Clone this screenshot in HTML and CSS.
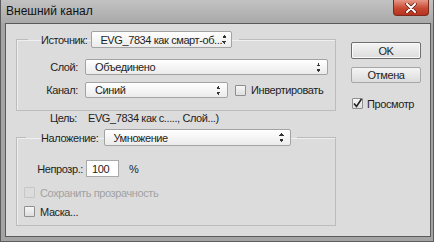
FILE: index.html
```html
<!DOCTYPE html>
<html lang="ru">
<head>
    <meta charset="UTF-8">
    <title>Внешний канал</title>
    <link rel="stylesheet" href="styles.css">
</head>
<body>
    <div class="window">
        <div class="titlebar">
            <span class="title">Внешний канал</span>
            <span class="close">
                <svg width="12" height="10" viewBox="0 0 12 10">
                    <path d="M2 1 L10 9 M10 1 L2 9" stroke="#5a1a10" stroke-width="3.4" stroke-linecap="round"/>
                    <path d="M2 1 L10 9 M10 1 L2 9" stroke="#fff" stroke-width="2" stroke-linecap="round"/>
                </svg>
            </span>
        </div>

        <div class="panel">
            <div class="main">
                <fieldset class="group group-source">
                    <legend>
                        <span class="legend-row">
                            <span class="lbl">Источник:</span>
                            <span class="select select-source">EVG_7834 как смарт-об... <span class="arrows"></span></span>
                        </span>
                    </legend>
                    <div class="row first">
                        <span class="col">Слой:</span>
                        <span class="select select-layer">Объединено <span class="arrows"></span></span>
                    </div>
                    <div class="row">
                        <span class="col">Канал:</span>
                        <span class="select select-channel">Синий <span class="arrows"></span></span>
                        <span class="check invert"></span>
                        <span>Инвертировать</span>
                    </div>
                </fieldset>

                <div class="target">
                    <span class="col">Цель:</span>
                    <span class="target-value">EVG_7834 как с....., Слой...)</span>
                </div>

                <fieldset class="group group-blend">
                    <legend>
                        <span class="legend-row">
                            <span class="lbl">Наложение:</span>
                            <span class="select select-blend">Умножение <span class="arrows"></span></span>
                        </span>
                    </legend>
                    <div class="row opacity">
                        <span class="col-wide">Непрозр.:</span>
                        <span class="input">100</span>
                        <span class="percent">%</span>
                    </div>
                    <div class="check-row disabled first-check">
                        <span class="check"></span>
                        <span>Сохранить прозрачность</span>
                    </div>
                    <div class="check-row">
                        <span class="check"></span>
                        <span>Маска...</span>
                    </div>
                </fieldset>
            </div>

            <div class="side">
                <button class="btn btn-default">OK</button>
                <button class="btn">Отмена</button>
                <div class="check-row preview">
                    <span class="check">
                        <svg width="11" height="11" viewBox="0 0 11 11">
                            <path d="M2 5.5 L4.5 8.5 L9.5 1" fill="none" stroke="#222" stroke-width="1.6"/>
                        </svg>
                    </span>
                    <span>Просмотр</span>
                </div>
            </div>
        </div>
    </div>
</body>
</html>
```

FILE: styles.css
```css
body {
    margin: 0;
    background-color: #9e9e9e;
    font-family: 'Liberation Sans', Arial, sans-serif;
    font-size: 11px;
    letter-spacing: -0.4px;
    color: #1e1e1e;
}

.window {
    width: 434px;
    height: 242px;
    box-sizing: border-box;
    display: flex;
    flex-direction: column;
    background-color: #a4a4a4;
    border-left: 1px solid #5c5c5c;
    border-right: 1px solid #5c5c5c;
    border-bottom: 1px solid #5c5c5c;
}

.titlebar {
    height: 23px;
    flex-shrink: 0;
    display: flex;
    justify-content: space-between;
    align-items: flex-start;
    background: linear-gradient(#c2c2c2, #a9a9a9);
}

.title {
    padding-left: 5px;
    line-height: 23px;
    font-size: 12px;
    letter-spacing: 0;
    color: #111;
}

.close {
    width: 36px;
    height: 16px;
    margin-right: 4px;
    box-sizing: border-box;
    display: flex;
    align-items: center;
    justify-content: center;
    background: linear-gradient(#e59886, #c84a33 55%, #b5331f);
    border: 1px solid #7b2b1f;
    border-top: none;
    border-radius: 0 0 4px 4px;
}

.panel {
    flex: 1;
    margin: 0 2px 4px 4px;
    display: flex;
    padding: 7px 0 0 10px;
    background-color: #dcdcdc;
    border: 1px solid #5a5a5a;
}

.main {
    width: 320px;
}

/* group boxes */
.group {
    margin: 0;
    padding: 0;
    min-width: 0;
    border: 1px solid #bcbcbc;
    box-shadow: inset 1px 1px 0 #efefef;
}

.group legend {
    padding: 0;
}

.legend-row {
    display: flex;
    align-items: center;
}

.group-source legend {
    margin-left: 11px;
    padding: 0 7px 0 13px;
}

.group-source .lbl {
    margin-right: 4px;
}

.group-blend legend {
    margin-left: 9px;
    padding: 0 6px 0 15px;
}

.group-blend .lbl {
    margin-right: 6px;
}

.group-source {
    padding-bottom: 12px;
}

.group-blend {
    padding-bottom: 7px;
}

.row {
    display: flex;
    align-items: center;
    height: 16px;
    margin-top: 7px;
}

.row.first {
    margin-top: 11px;
}

.col {
    width: 61px;
    margin-right: 7px;
    text-align: right;
}

/* selects */
.select {
    height: 16px;
    box-sizing: border-box;
    display: flex;
    align-items: center;
    padding-left: 9px;
    background: linear-gradient(#ffffff, #ebebeb);
    border: 1px solid #a3a3a3;
    border-radius: 2px;
    white-space: nowrap;
    overflow: hidden;
}

.legend-row .select {
    height: 17px;
    padding-left: 8px;
}

.select-source { width: 141px; }
.select-layer { width: 243px; }
.select-channel { width: 143px; }
.select-blend { width: 187px; }

.arrows {
    flex-shrink: 0;
    margin-left: auto;
    margin-right: 6px;
    width: 5px;
    height: 9px;
    background:
        linear-gradient(to bottom right, transparent 50%, #333 50%) 0 0 / 3px 3px no-repeat,
        linear-gradient(to bottom left, transparent 50%, #333 50%) 2px 0 / 3px 3px no-repeat,
        linear-gradient(to top right, transparent 50%, #333 50%) 0 6px / 3px 3px no-repeat,
        linear-gradient(to top left, transparent 50%, #333 50%) 2px 6px / 3px 3px no-repeat;
}

/* checkboxes */
.check {
    width: 11px;
    height: 11px;
    box-sizing: border-box;
    flex-shrink: 0;
    display: flex;
    background: linear-gradient(#f6f6f6, #dedede);
    border: 1px solid #8e8e8e;
    border-radius: 1px;
}

.check svg {
    margin: -1px;
}

.check.invert {
    margin: 0 5px 0 7px;
}

.check-row {
    display: flex;
    align-items: center;
    gap: 5px;
    height: 13px;
    margin: 6px 0 0 7px;
}

.check-row.first-check {
    margin-top: 9px;
}

.check-row.disabled {
    color: #a2a2a2;
}

.check-row.disabled .check {
    background: #dcdcdc;
    border-color: #c6c6c6;
}

/* target line */
.target {
    display: flex;
    align-items: center;
    height: 14px;
    margin-bottom: 4px;
}

.target .col {
    margin-right: 11px;
}

/* opacity */
.row.opacity {
    margin-top: 14px;
    height: 17px;
}

.col-wide {
    width: 66px;
    margin-right: 3px;
    text-align: right;
}

.input {
    width: 33px;
    height: 17px;
    box-sizing: border-box;
    padding-left: 5px;
    display: flex;
    align-items: center;
    background-color: #fff;
    border: 1px solid #a9a9a9;
}

.percent {
    margin-left: 10px;
}

/* right column */
.side {
    margin-left: 15px;
    padding-top: 11px;
    width: 70px;
}

.btn {
    display: block;
    width: 70px;
    height: 16px;
    padding: 0;
    font-family: inherit;
    font-size: 11px;
    letter-spacing: inherit;
    color: #1e1e1e;
    background: linear-gradient(#f4f4f4, #dcdcdc);
    border: 1px solid #a6a6a6;
    border-radius: 2px;
}

.btn-default {
    height: 17px;
    margin-bottom: 8px;
    border-color: #6e6e6e;
    box-shadow: inset 0 0 0 1px #fafafa;
}

.check-row.preview {
    margin: 14px 0 0 1px;
    gap: 4px;
}
```
